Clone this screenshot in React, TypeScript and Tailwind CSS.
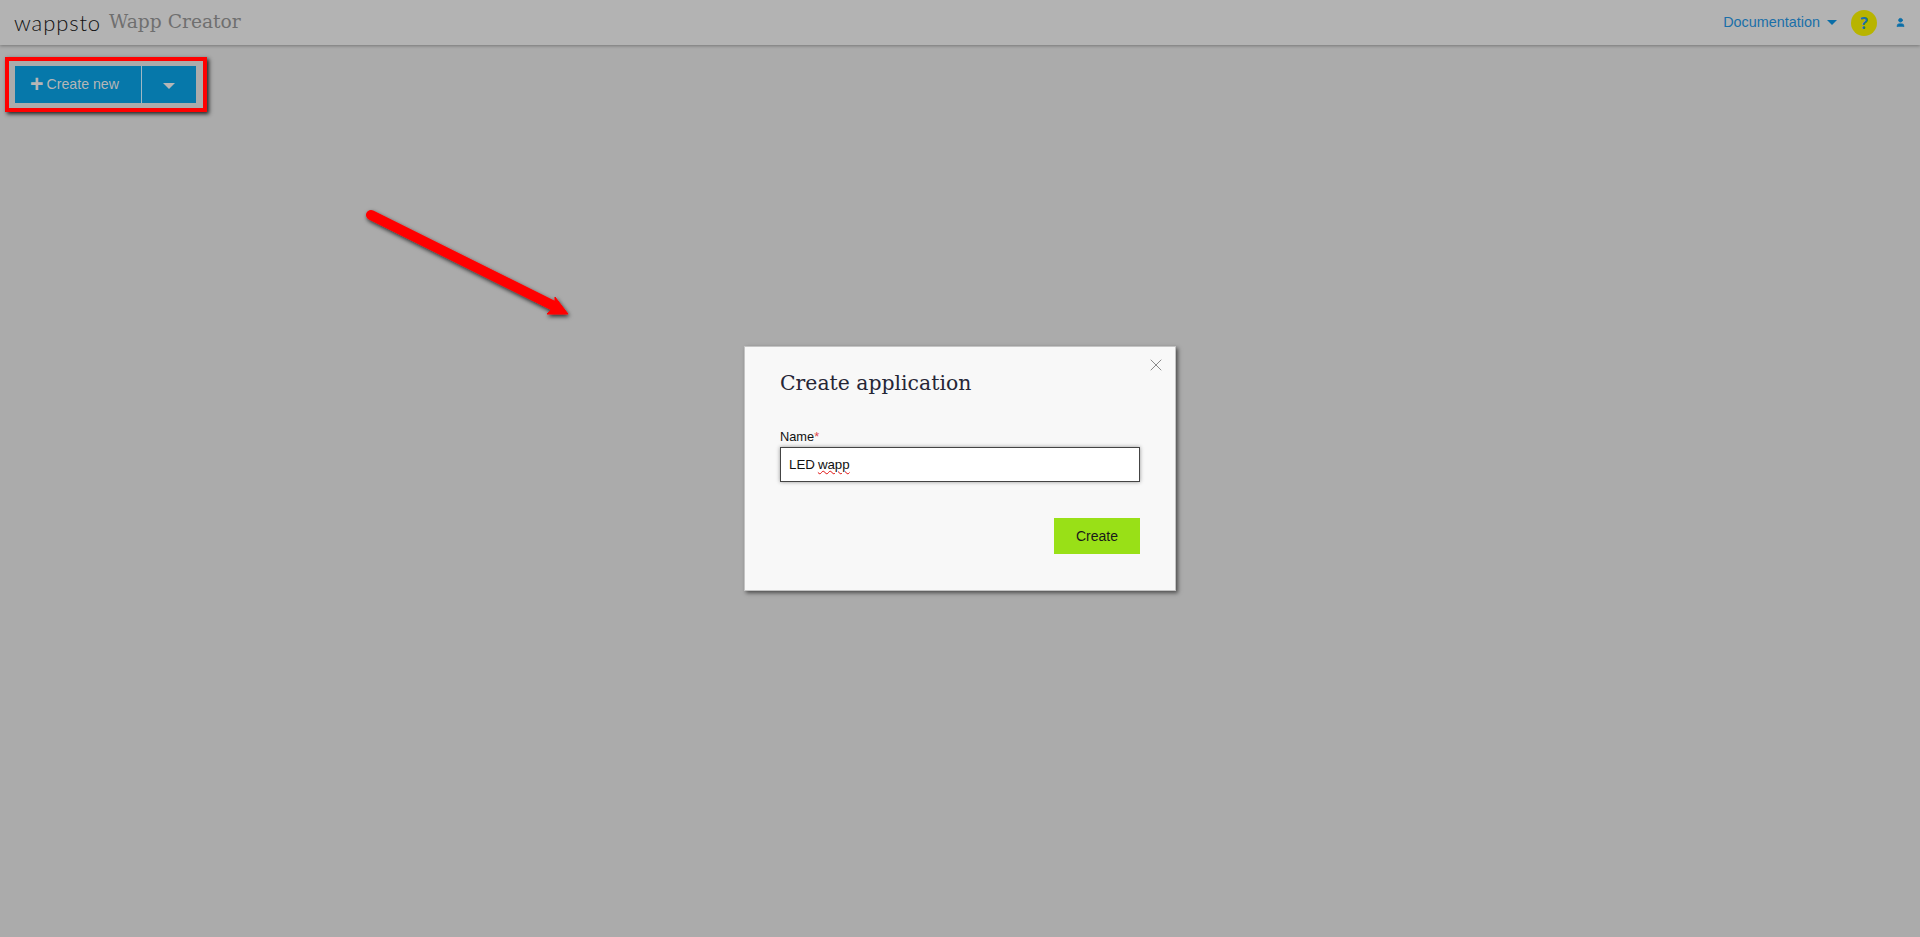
import React from "react";
import { User, X } from "lucide-react";

const sans = "font-['Liberation_Sans',Arial,sans-serif]";
const slab = "font-['DejaVu_Serif',serif]";

function Caret({ className }: { className: string }) {
  return (
    <svg viewBox="0 0 12 6" className={className}>
      <path d="M0 0h12L6 6z" fill="currentColor" />
    </svg>
  );
}

function Header() {
  return (
    <header className="flex h-[45px] items-center justify-between bg-[#b3b3b3] pl-[14px] pr-[14px] shadow-[0_1px_3px_rgba(0,0,0,0.3)]">
      <div className="flex items-center">
        <span className="font-['Lato',sans-serif] text-[22px] font-light leading-none tracking-[0.9px] text-[#111]">wappsto</span>
        <span className={`${slab} ml-[8px] text-[18.7px] leading-none text-[#6f6f6f]`}>Wapp Creator</span>
      </div>
      <div className="flex items-center">
        <span className={`${sans} text-[14.4px] text-[#1a6fa8]`}>Documentation</span>
        <Caret className="ml-[7px] h-[5px] w-[10px] text-[#0a6ea8]" />
        <span className="ml-[14px] flex h-[26px] w-[26px] items-center justify-center rounded-full bg-[#b8b400] text-[16px] font-bold text-[#1a6fa8]">?</span>
        <User className="ml-[18px] h-[11px] w-[11px] fill-[#0a6ea8] text-[#0a6ea8]" />
      </div>
    </header>
  );
}

function CreateNew() {
  return (
    <div className="ml-[5px] mt-[12px] w-[202px] border-[4px] border-[#ff0000] p-[5px] pl-[6px] pr-[7px] shadow-[2px_2px_4px_rgba(0,0,0,0.8)]">
      <div className={`${sans} flex h-[37px] bg-[#0678aa] text-[14.2px] text-[#b6b6b6]`}>
        <div className="flex w-[127px] items-center border-r border-[#9fb8c4] pl-[15px]">
          <span className="mr-[3px] text-[23px] font-bold leading-none">+</span>
          Create new
        </div>
        <div className="flex flex-1 items-center justify-center">
          <Caret className="mt-[3px] h-[6px] w-[12px] text-[#b6b6b6]" />
        </div>
      </div>
    </div>
  );
}

function Arrow() {
  return (
    <svg className="absolute left-[360px] top-[205px] h-[125px] w-[225px]" viewBox="0 0 225 125">
      <defs>
        <filter id="arrowShadow" x="-10%" y="-10%" width="120%" height="130%">
          <feDropShadow dx="1" dy="2" stdDeviation="2" floodColor="#000" floodOpacity="0.75" />
        </filter>
      </defs>
      <g filter="url(#arrowShadow)">
        <path d="M11 10 L196 102" stroke="#ff0000" strokeWidth="10" strokeLinecap="round" fill="none" />
        <path d="M208 109 L187 109 L195 101 L195 92 Z" fill="#ff0000" stroke="#ff0000" strokeWidth="1" />
      </g>
    </svg>
  );
}

function Modal() {
  return (
    <div className="absolute inset-0 flex items-center justify-center">
      <div className="relative h-[245px] w-[432px] border border-[#c4c4c4] bg-[#f8f8f8] pl-[35px] pr-[35px] pt-[21px] shadow-[2px_2px_4px_rgba(0,0,0,0.55)]">
        <X className="absolute right-[9px] top-[8px] h-[20px] w-[20px] text-[#8a8a8a]" strokeWidth={1.2} />
        <h2 className={`${slab} text-[20.4px] leading-[30px] text-[#262636]`}>Create application</h2>
        <label className={`${sans} mt-[31px] block text-[12.8px] leading-[16px] text-[#111]`}>
          Name<span className="text-[#e0474c]">*</span>
        </label>
        <div className={`${sans} mt-[2px] flex h-[35px] items-center border border-[#444] bg-white pl-[8px] pt-[1px] text-[13.3px] text-[#111] shadow-[0_0_4px_rgba(0,0,0,0.4)]`}>
          LED <span className="ml-[3px] underline decoration-wavy decoration-[#e01010] decoration-1 underline-offset-1">wapp</span>
        </div>
        <div className="mt-[36px] flex justify-end">
          <button className={`${sans} h-[36px] w-[86px] bg-[#99e017] text-[14px] text-[#1a1a1a]`}>Create</button>
        </div>
      </div>
    </div>
  );
}

export default function App() {
  return (
    <div className="relative h-screen overflow-hidden bg-[#ababab]">
      <Header />
      <CreateNew />
      <Arrow />
      <Modal />
    </div>
  );
}
